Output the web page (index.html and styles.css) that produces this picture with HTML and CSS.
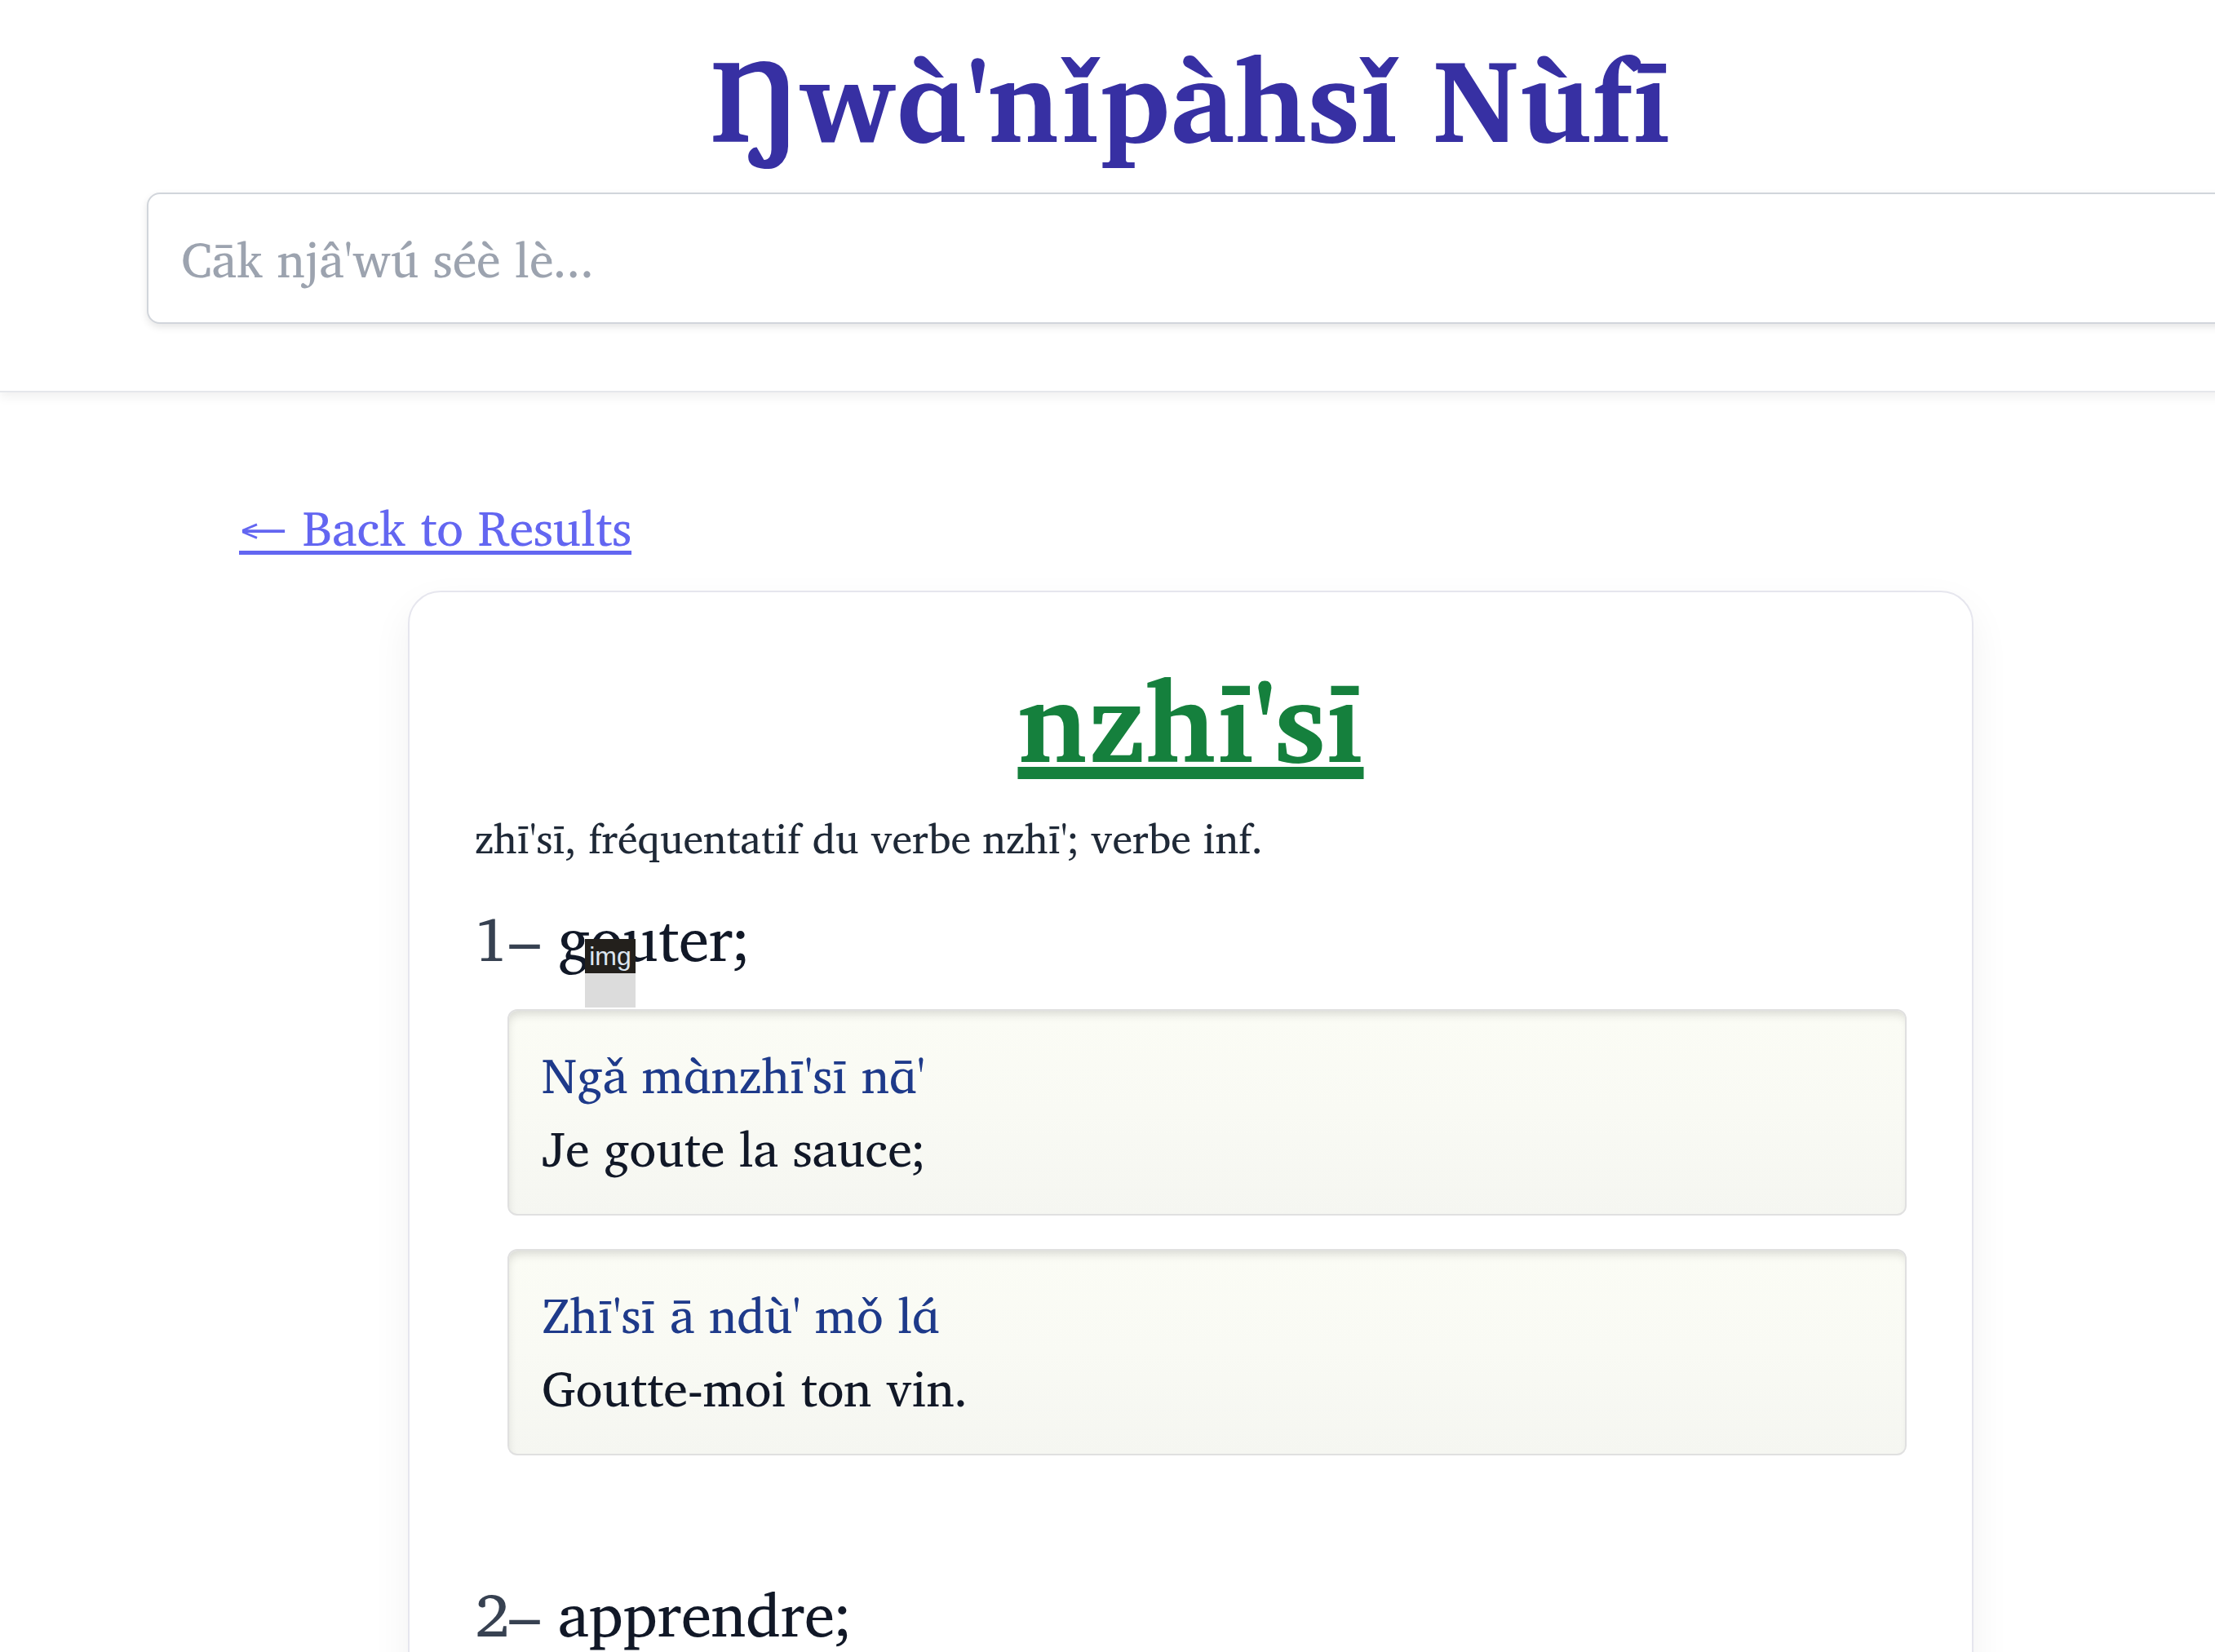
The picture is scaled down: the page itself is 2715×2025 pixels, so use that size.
FILE: index.html
```html
<!DOCTYPE html>
<html lang="fr">
<head>
<meta charset="utf-8">
<title>Ŋwɑ̀'nǐpàhsǐ Nùfī — nzhī'sī</title>
<link rel="stylesheet" href="styles.css">
</head>
<body>
<div class="page">
  <header class="site-header">
    <h1 class="brand">Ŋwɑ̀'nǐpàhsǐ Nùfī</h1>
    <div class="search">
      <input class="search-input" type="text" placeholder="Cāk njâ'wú séè lè...">
    </div>
  </header>

  <main class="main">
    <a class="back-link" href="#">← Back to Results</a>

    <article class="entry-card">
      <h2 class="entry-word"><a href="#">nzhī'sī</a></h2>
      <p class="entry-gram">zhī'sī, fréquentatif du verbe nzhī'; verbe inf.</p>

      <section class="sense">
        <h3 class="sense-title"><span class="sense-num">1– </span>gouter;<span class="img-tag"><span class="img-label">img</span></span></h3>
        <div class="example">
          <p class="ex-nufi">Ngǎ mɑ̀nzhī'sī nɑ̄'</p>
          <p class="ex-fr">Je goute la sauce;</p>
        </div>
        <div class="example">
          <p class="ex-nufi">Zhī'sī ā ndù' mǒ lɑ́</p>
          <p class="ex-fr">Goutte-moi ton vin.</p>
        </div>
      </section>

      <section class="sense sense-2">
        <h3 class="sense-title"><span class="sense-num">2– </span>apprendre;</h3>
      </section>
    </article>
  </main>
</div>
</body>
</html>
```
FILE: styles.css
```css
html, body {
  margin: 0;
  padding: 0;
  overflow: hidden;
  background: #ffffff;
}

body {
  font-family: "Charis SIL", "Liberation Serif", serif;
  color: #1f2937;
}

.page {
  width: 2919px;
}

/* ---------- header ---------- */
.site-header {
  background: #ffffff;
  padding: 49px 180px 82px;
  border-bottom: 2px solid #e5e7eb;
  box-shadow: 0 6px 12px rgba(0, 0, 0, 0.06);
}

.brand {
  margin: 0;
  text-align: center;
  font-size: 143px;
  line-height: 1;
  font-weight: 700;
  color: #3730a3;
}

.search {
  margin-top: 44px;
}

.search-input {
  display: block;
  box-sizing: border-box;
  width: 100%;
  height: 161px;
  padding: 0 40px;
  border: 2px solid #d1d5db;
  border-radius: 16px;
  background: #ffffff;
  box-shadow: 0 4px 10px rgba(0, 0, 0, 0.10);
  font-family: "Charis SIL", "Liberation Serif", serif;
  font-size: 60px;
  color: #1f2937;
  outline: none;
}

.search-input::placeholder {
  color: #9ca3af;
}

/* ---------- main ---------- */
.main {
  padding: 120px 293px 0;
}

.back-link {
  display: inline-block;
  font-size: 60px;
  line-height: 1.5;
  color: #6366f1;
  text-decoration: underline;
  text-decoration-thickness: 5px;
  text-underline-offset: 6px;
}

.entry-card {
  box-sizing: border-box;
  width: 1919px;
  margin: 33px auto 0;
  padding: 72px 80px 80px;
  background: #ffffff;
  border: 2px solid #e6e6ee;
  border-radius: 40px;
  box-shadow: 0 20px 50px rgba(0, 0, 0, 0.06);
}

.entry-word {
  margin: 0;
  text-align: center;
  font-size: 140px;
  line-height: 1.2;
  font-weight: 700;
}

.entry-word a {
  color: #15803d;
  text-decoration: underline;
  text-decoration-thickness: 15px;
  text-underline-offset: 6px;
}

.entry-gram {
  margin: 24px 0 0;
  font-size: 50px;
  line-height: 1.5;
  color: #1f2937;
}

.sense {
  margin-top: 40px;
}

.sense-title {
  position: relative;
  margin: 0;
  font-size: 75px;
  line-height: 1.2;
  font-weight: 400;
  color: #111827;
}

.sense-num {
  color: #374151;
}

/* overlay label sitting on top of the sense title */
.img-tag {
  position: absolute;
  left: 135px;
  top: 46px;
  width: 62px;
  height: 84px;
  background: #dcdcdc;
}

.img-label {
  display: block;
  height: 42px;
  background: #23201c;
  color: #dce6f0;
  font-family: "Liberation Sans", Arial, sans-serif;
  font-size: 32px;
  line-height: 42px;
  text-align: center;
}

.example {
  margin: 42px 0 0 40px;
  padding: 33px 40px 36px;
  border: 2px solid #e0e0e0;
  border-radius: 12px;
  background: linear-gradient(180deg, #fbfcf5 0%, #f9faf4 50%, #f5f6f1 100%);
  box-shadow: inset 2px 8px 12px -4px rgba(0, 0, 0, 0.14);
}

.example + .example {
  margin-top: 41px;
}

.ex-nufi,
.ex-fr {
  margin: 0;
  font-size: 60px;
  line-height: 1.5;
}

.ex-nufi {
  color: #1e3a8a;
}

.ex-fr {
  color: #111827;
}

.sense-2 {
  margin-top: 149px;
}
```
